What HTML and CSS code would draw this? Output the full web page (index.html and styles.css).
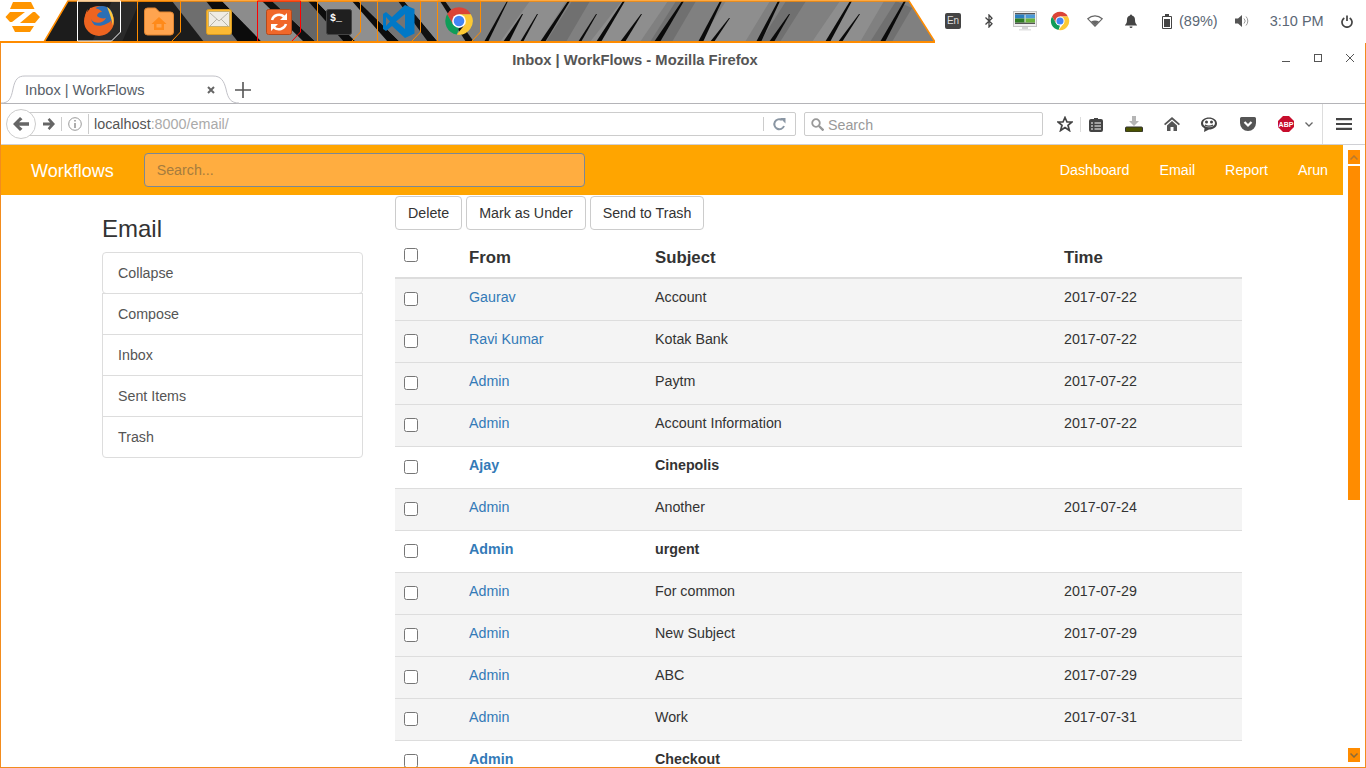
FILE: index.html

```html
<!DOCTYPE html>
<html>
<head>
<meta charset="utf-8">
<title>Inbox | WorkFlows</title>
<link rel="stylesheet" href="styles.css">
</head>
<body>

<svg class="defs">
  <symbol id="chrome" viewBox="0 0 48 48">
    <path fill="#db4437" d="M24 2A22 22 0 0 1 43 13H24L14.500 29.500 5 13A22 22 0 0 1 24 2Z"/>
    <path fill="#0f9d58" d="M5 13L14.500 29.500 24 35 20.500 45.700A22 22 0 0 1 5 13Z"/>
    <path fill="#fcc934" d="M43 13A22 22 0 0 1 20.500 45.700L33.500 29.500 24 13Z"/>
    <circle cx="24" cy="24" r="11" fill="#fff"/>
    <circle cx="24" cy="24" r="8.500" fill="#4285f4"/>
  </symbol>
</svg>

<div class="panel">
  <svg class="launcher" width="935" height="43" viewBox="0 0 935 43">
    <!-- band picture -->
    <polygon fill="#808080" points="68,1 909,1 935,42 44,42"/>
    <polygon fill="#1c1c1c" points="68,1 200,1 226,42 44,42"/>
    <polygon fill="#2a2a2a" points="112,1 140,1 122,42 92,42"/>
    <polygon fill="#6e6e6e" points="172,1 206,1 238,42 204,42"/>
    <polygon fill="#0c0c0c" points="206,1 222,1 262,42 238,42"/>
    <polygon fill="#8c8c8c" points="222,1 262,1 304,42 262,42"/>
    <polygon fill="#111" points="262,1 272,1 316,42 304,42"/>
    <polygon fill="#666" points="272,1 308,1 344,42 316,42"/>
    <polygon fill="#0c0c0c" points="308,1 316,1 356,42 344,42"/>
    <polygon fill="#8f8f8f" points="316,1 352,1 388,42 356,42"/>
    <polygon fill="#0c0c0c" points="352,1 358,1 400,42 388,42"/>
    <polygon fill="#747474" points="358,1 398,1 428,42 400,42"/>
    <polygon fill="#111" points="398,1 404,1 438,42 428,42"/>
    <polygon fill="#8a8a8a" points="404,1 440,1 466,42 438,42"/>
    <polygon fill="#111" points="440,1 445,1 474,42 466,42"/>
    <g fill="#8e8e8e">
      <polygon points="500,42 540,42 566,1 530,1"/>
      <polygon points="590,42 640,42 668,1 622,1"/>
      <polygon points="700,42 745,42 770,1 726,1"/>
      <polygon points="812,42 860,42 884,1 840,1"/>
    </g>
    <g fill="#707070">
      <polygon points="546,42 566,42 590,1 572,1"/>
      <polygon points="650,42 672,42 696,1 676,1"/>
      <polygon points="760,42 780,42 806,1 786,1"/>
      <polygon points="870,42 892,42 912,8 896,1"/>
    </g>
    <g fill="#0a0a0a">
      <polygon points="484,42 488,42 508,1 507,1"/>
      <polygon points="503,42 509,42 523,14 522,14"/>
      <polygon points="520,42 523,42 538,14 537,14"/>
      <polygon points="540,42 545,42 570,1 568,1"/>
      <polygon points="578,42 581,42 597,14 596,14"/>
      <polygon points="596,42 601,42 625,1 623,1"/>
      <polygon points="620,42 625,42 642,14 641,14"/>
      <polygon points="654,42 660,42 684,1 682,1"/>
      <polygon points="698,42 703,42 722,1 720,1"/>
      <polygon points="756,42 761,42 780,1 778,1"/>
      <polygon points="769,42 774,42 790,14 789,14"/>
      <polygon points="825,42 830,42 852,1 850,1"/>
      <polygon points="838,42 842,42 860,14 859,14"/>
      <polygon points="880,42 885,42 906,1 904,1"/>
      <polygon points="710,42 714,42 730,18 729,18"/>
    </g>
    <path fill="none" stroke="#ff8c00" stroke-width="1.500" d="M44 42L68 1H909L935 42"/>
    <path fill="none" stroke="#ff8c00" stroke-width="2" d="M0 42H935"/>

    <!-- zorin logo -->
    <g fill="#ff9500">
      <polygon points="13,2 31,2 34.500,9 10,9"/>
      <polygon points="5.500,17 10,12 25,12 12,22 10,22"/>
      <polygon points="40,17 35,23 20,23 33,12 35,12"/>
      <polygon points="12,26 34,26 30,32 15,32"/>
    </g>

    <!-- launcher cells -->
    <g fill="none" stroke-width="1">
      <path stroke="#fff" d="M77.500 41V1H120.500V32L111.500 41Z"/>
      <path stroke="#ff8c00" d="M137.500 41V1H180.500V32L172 41"/>
      <path stroke="#f00" d="M257.500 41V1H300.500V32L292 41"/>
      <path stroke="#ff8c00" d="M317.500 41V1H360.500V32L352 41"/>
      <path stroke="#ff8c00" d="M377.500 41V1H420.500V32L412 41"/>
      <path stroke="#ff8c00" d="M437.500 41V1H480.500V32L472 41"/>
    </g>

    <!-- firefox -->
    <circle cx="99" cy="21" r="15" fill="#ee6420"/>
    <circle cx="102" cy="17" r="11" fill="#2d6fb5"/>
    <path fill="#ffc63a" d="M107 7C112 10 115 18 113 26C112 21 110 14 107 7Z"/>
    <path fill="#ee6420" d="M88 9C86 14 86 20 90 23C94 26 101 27 106 24C109 23 111 21 112 19C111 27 105 33 97 32C90 31 85 25 85 18C85 15 86 11 88 9Z"/>
    <path fill="#ee6420" d="M90 8C94 7 100 9 102 12C99 12 97 14 97 16C99 18 103 19 106 18C104 22 99 24 94 22C90 20 88 13 90 8Z"/>

    <!-- folder -->
    <path fill="#ffa44f" stroke="#e08430" d="M144.500 11a3 3 0 0 1 3-3h8l4 4h11a3 3 0 0 1 3 3v17a3 3 0 0 1-3 3h-23a3 3 0 0 1-3-3Z"/>
    <path fill="#ff8a1a" d="M159 17l7.500 7h-2.500V30h-10v-6h-2.500ZM156.500 24v3.500h5V24Z"/>

    <!-- mail -->
    <rect x="206.500" y="9.500" width="25" height="25" rx="2" fill="#fbb934" stroke="#d99a20"/>
    <rect x="208.500" y="11.500" width="21" height="15" fill="#efece4" stroke="#c8b070"/>
    <path fill="none" stroke="#b8b4a8" d="M210 13l9 8 9-8M210 26l7-7M228 26l-7-7"/>

    <!-- sync -->
    <rect x="266.500" y="9.500" width="25" height="25" rx="2" fill="#f0672a" stroke="#b34a1c"/>
    <path fill="none" stroke="#fff" stroke-width="2.500" d="M272 20a7.500 7.500 0 0 1 12-3.500M286 24a7.500 7.500 0 0 1-12 3.500"/>
    <path fill="#fff" d="M287 13v7h-7ZM271 31v-7h7Z"/>

    <!-- terminal -->
    <rect x="326.500" y="9.500" width="25" height="25" rx="2" fill="#1f1f1f" stroke="#444"/>
    <text class="term-text" x="330" y="21">$_</text>

    <!-- vs code -->
    <path fill="#0078c6" d="M405 5L414.500 9V33.500L405 38L392 26L386 31L383 29V14L386 12L392 17ZM405 14L396 21.500L405 29ZM386 17V26L390 21.500Z"/>

    <use href="#chrome" x="444" y="6" width="30" height="30"/>
  </svg>

  <div class="tray">
    <span class="tray-en">En</span>
    <svg class="tray-bt" width="8" height="14" viewBox="0 0 8 14"><path fill="none" stroke="#444" stroke-width="1.300" d="M0.500 3.500L7 9.800 4 13V1L7 4.200 0.500 10.500"/></svg>
    <svg class="tray-monitor" width="24" height="20" viewBox="0 0 24 20">
      <rect x="0.500" y="0.500" width="23" height="15" fill="#efefef" stroke="#c4c4c4"/>
      <rect x="2" y="2" width="20" height="1.500" fill="#555"/>
      <rect x="2" y="11.500" width="20" height="1.500" fill="#555"/>
      <rect x="2" y="3.500" width="9.500" height="4" fill="#2b7fc0"/>
      <rect x="12.500" y="3.500" width="9.500" height="4" fill="#4b9ad8"/>
      <rect x="2" y="7.500" width="9.500" height="4" fill="#2f7d24"/>
      <rect x="12.500" y="7.500" width="9.500" height="4" fill="#6ab23c"/>
      <rect x="9" y="16" width="6" height="2" fill="#d4d4d4"/>
      <rect x="6" y="18" width="12" height="1.500" fill="#e2e2e2"/>
    </svg>
    <svg class="tray-chrome" width="20" height="20"><use href="#chrome" width="20" height="20"/></svg>
    <svg class="tray-wifi" width="16" height="12" viewBox="0 0 16 12"><path fill="none" stroke="#666" stroke-width="1.200" d="M0.800 3.800C5 0 11 0 15.200 3.800L8 11.200Z"/><path fill="#666" d="M4 6.500C6.500 5 9.500 5 12 6.500L8 10.500Z"/></svg>
    <svg class="tray-bell" width="12" height="14" viewBox="0 0 12 14"><path fill="#444" d="M6 0.500a1 1 0 0 1 1 1C9.500 2 10 4 10 6c0 3 1 4 2 5v0.500H0V11c1-1 2-2 2-5 0-2 .5-4 3-4.500a1 1 0 0 1 1-1ZM4.500 12.500h3a1.500 1.500 0 0 1-3 0Z"/></svg>
    <svg class="tray-battery" width="10" height="15" viewBox="0 0 10 15"><path fill="none" stroke="#444" d="M0.500 2.500H9.500V14.500H0.500Z"/><rect x="3" y="0" width="4" height="2" fill="#444"/><rect x="2" y="5" width="6" height="8" fill="#444"/></svg>
    <span class="tray-text tray-percent">(89%)</span>
    <svg class="tray-volume" width="14" height="14" viewBox="0 0 14 14"><path fill="#555" d="M0 4.500H3L7 1V13L3 9.500H0Z"/><path fill="none" stroke="#999" d="M9 4.500a3.500 3.500 0 0 1 0 5M11 2.500a6.500 6.500 0 0 1 0 9"/></svg>
    <span class="tray-text tray-time">3:10 PM</span>
    <svg class="tray-power" width="12" height="13" viewBox="0 0 12 13"><path fill="none" stroke="#444" stroke-width="1.700" d="M3.300 3A5 5 0 1 0 8.700 3M6 0.500V6"/></svg>
  </div>
</div>

<div class="window">
  <div class="titlebar">
    <div class="title">Inbox | WorkFlows - Mozilla Firefox</div>
    <div class="controls">
      <svg width="8" height="8" viewBox="0 0 8 8"><path stroke="#555" d="M0 7.500H8"/></svg>
      <svg width="8" height="8" viewBox="0 0 8 8"><rect x="0.500" y="0.500" width="7" height="7" fill="none" stroke="#555"/></svg>
      <svg width="8" height="8" viewBox="0 0 8 8"><path stroke="#555" d="M0 0L8 8M8 0L0 8"/></svg>
    </div>
  </div>

  <div class="tabbar">
    <div class="tab">
      <svg class="tab-shape" width="238" height="29" viewBox="0 0 238 29"><path fill="#fff" stroke="#c2c2c8" d="M0 28C8 28 10 24 12 14C14 4 17 1 24 1H212C220 1 223 6 225 14C227 24 230 28 238 28"/></svg>
      <span class="tab-label">Inbox | WorkFlows</span>
      <svg class="tab-close" width="8" height="8" viewBox="0 0 8 8"><path stroke="#666" stroke-width="2" d="M1 1L7 7M7 1L1 7"/></svg>
    </div>
    <svg class="tab-new" width="16" height="16" viewBox="0 0 16 16"><path stroke="#555" stroke-width="1.600" d="M8 0V16M0 8H16"/></svg>
  </div>

  <div class="navbar">
    <div class="back">
      <svg width="16" height="14" viewBox="0 0 16 14"><path fill="#666" d="M7 0L9.500 2.200 6 5.300H16V8.700H6L9.500 11.800 7 14 0 7Z"/></svg>
    </div>
    <div class="urlbar">
      <svg class="forward" width="12" height="12" viewBox="0 0 12 12"><path fill="#666" d="M6.500 0L12 6 6.500 12 4.700 10.200 7 7.400H0V4.600H7L4.700 1.800Z"/></svg>
      <svg class="info" width="14" height="14" viewBox="0 0 14 14"><circle cx="7" cy="7" r="6.300" fill="none" stroke="#999"/><path fill="#999" d="M6.200 3h1.600v1.600H6.200ZM6.200 6h1.600v5H6.200Z"/></svg>
      <span class="url"><span class="url-host">localhost</span>:8000/email/</span>
      <svg class="reload" width="14" height="14" viewBox="0 0 14 14"><path fill="none" stroke="#8a96a3" stroke-width="2" d="M12 9A5 5 0 1 1 10 3"/><path fill="#8a96a3" d="M8 1L13.500 1V6.500Z"/></svg>
    </div>
    <div class="searchbar">
      <svg width="13" height="13" viewBox="0 0 13 13"><circle cx="5" cy="5" r="3.800" fill="none" stroke="#999" stroke-width="1.800"/><path stroke="#999" stroke-width="2.400" d="M8 8L12.500 12.500"/></svg>
      <span class="search-text">Search</span>
    </div>
    <div class="tools">
      <svg class="tool-star" width="16" height="16" viewBox="0 0 16 16"><path fill="none" stroke="#444" stroke-width="1.700" d="M8 1.500L10 6H15L11 9.300 12.400 14.500 8 11.500 3.600 14.500 5 9.300 1 6H6Z"/></svg>
      <svg class="tool-clip" width="14" height="15" viewBox="0 0 14 15"><path fill="#444" d="M2 2H5V1H9V2H12A2 2 0 0 1 14 4V13A2 2 0 0 1 12 15H2A2 2 0 0 1 0 13V4A2 2 0 0 1 2 2Z"/><path stroke="#fff" d="M2 6H4M2 9H4M2 12H4M5.500 6H12M5.500 9H12M5.500 12H12"/></svg>
      <svg class="tool-down" width="18" height="16" viewBox="0 0 18 16"><path fill="#b5b5b5" d="M7 0H11V5H14L9 10 4 5H7Z"/><rect x="0.500" y="11" width="17" height="5" rx="1" fill="#4a5200" stroke="#333"/></svg>
      <svg class="tool-home" width="16" height="14" viewBox="0 0 16 14"><path fill="#555" d="M8 0L16 7 14.800 8.200 8 2.400 1.200 8.200 0 7ZM3 8.500L8 4 13 8.500V14H9.500V10H6.500V14H3Z"/></svg>
      <svg class="tool-smile" width="16" height="15" viewBox="0 0 16 15"><path fill="#444" d="M8 0.500C12.400 0.500 16 3 16 6.500S12.400 12.500 8 12.500L3 15 3.500 11.300C1.300 10.200 0 8.500 0 6.500 0 3 3.600 0.500 8 0.500Z"/><ellipse cx="8" cy="6" rx="6" ry="4.300" fill="#fff"/><circle cx="5.500" cy="5" r="1.500" fill="#444"/><circle cx="10.500" cy="5" r="1.500" fill="#444"/><path fill="none" stroke="#444" stroke-width="1.200" d="M4 8C6 9.500 10 9.500 12 8"/></svg>
      <svg class="tool-pocket" width="16" height="14" viewBox="0 0 16 14"><path fill="#555" d="M1.500 0H14.500A1.500 1.500 0 0 1 16 1.500V6A8 8 0 0 1 0 6V1.500A1.500 1.500 0 0 1 1.500 0Z"/><path fill="none" stroke="#fff" stroke-width="2.200" d="M4.500 5L8 8.500 11.500 5"/></svg>
      <svg class="tool-abp" width="16" height="16" viewBox="0 0 16 16"><polygon fill="#c70d2c" points="5,0 11,0 16,5 16,11 11,16 5,16 0,11 0,5"/><text class="abp-text" x="8" y="11">ABP</text></svg>
      <svg class="tool-chev" width="8" height="5" viewBox="0 0 8 5"><path fill="none" stroke="#666" stroke-width="1.300" d="M0.500 0.500L4 4 7.500 0.500"/></svg>
      <svg class="tool-menu" width="16" height="12" viewBox="0 0 16 12"><path stroke="#444" stroke-width="2.200" d="M0 1.200H16M0 6H16M0 10.800H16"/></svg>
    </div>
  </div>

  <div class="viewport">
    <div class="page">
      <div class="site-nav">
        <a class="brand">Workflows</a>
        <input class="site-search" placeholder="Search...">
        <div class="site-links">
          <a>Dashboard</a>
          <a>Email</a>
          <a>Report</a>
          <a>Arun</a>
        </div>
      </div>

      <div class="content">
        <div class="sidebar">
          <h3>Email</h3>
          <div class="list-group">
            <a class="list-item">Collapse</a>
            <a class="list-item">Compose</a>
            <a class="list-item">Inbox</a>
            <a class="list-item">Sent Items</a>
            <a class="list-item">Trash</a>
          </div>
        </div>

        <div class="mail">
          <div class="actions">
            <button class="btn">Delete</button>
            <button class="btn">Mark as Under</button>
            <button class="btn">Send to Trash</button>
          </div>
          <table class="mail-table">
            <thead>
              <tr>
                <th class="check"><input type="checkbox"></th>
                <th class="col-from">From</th>
                <th class="col-subject">Subject</th>
                <th class="col-time">Time</th>
              </tr>
            </thead>
            <tbody>
              <tr class="read"><td class="check"><input type="checkbox"></td><td><a>Gaurav</a></td><td>Account</td><td>2017-07-22</td></tr>
              <tr class="read"><td class="check"><input type="checkbox"></td><td><a>Ravi Kumar</a></td><td>Kotak Bank</td><td>2017-07-22</td></tr>
              <tr class="read"><td class="check"><input type="checkbox"></td><td><a>Admin</a></td><td>Paytm</td><td>2017-07-22</td></tr>
              <tr class="read"><td class="check"><input type="checkbox"></td><td><a>Admin</a></td><td>Account Information</td><td>2017-07-22</td></tr>
              <tr class="unread"><td class="check"><input type="checkbox"></td><td><a>Ajay</a></td><td>Cinepolis</td><td></td></tr>
              <tr class="read"><td class="check"><input type="checkbox"></td><td><a>Admin</a></td><td>Another</td><td>2017-07-24</td></tr>
              <tr class="unread"><td class="check"><input type="checkbox"></td><td><a>Admin</a></td><td>urgent</td><td></td></tr>
              <tr class="read"><td class="check"><input type="checkbox"></td><td><a>Admin</a></td><td>For common</td><td>2017-07-29</td></tr>
              <tr class="read"><td class="check"><input type="checkbox"></td><td><a>Admin</a></td><td>New Subject</td><td>2017-07-29</td></tr>
              <tr class="read"><td class="check"><input type="checkbox"></td><td><a>Admin</a></td><td>ABC</td><td>2017-07-29</td></tr>
              <tr class="read"><td class="check"><input type="checkbox"></td><td><a>Admin</a></td><td>Work</td><td>2017-07-31</td></tr>
              <tr class="unread"><td class="check"><input type="checkbox"></td><td><a>Admin</a></td><td>Checkout</td><td></td></tr>
            </tbody>
          </table>
        </div>
      </div>
    </div>

    <div class="scrollbar">
      <div class="scroll-btn">
        <svg width="8" height="5" viewBox="0 0 8 5"><path fill="none" stroke="#b87a2c" stroke-width="1.500" d="M0.500 4.500L4 1 7.500 4.500"/></svg>
      </div>
      <div class="scroll-thumb"></div>
      <div class="scroll-btn scroll-down">
        <svg width="8" height="5" viewBox="0 0 8 5"><path fill="none" stroke="#8a6a3a" stroke-width="1.500" d="M0.500 0.500L4 4 7.500 0.500"/></svg>
      </div>
    </div>
  </div>
</div>

</body>
</html>
```

FILE: styles.css

```css
html, body {
    margin: 0;
    height: 768px;
    overflow: hidden;
    background: #fff;
    font-family: "Liberation Sans", Arial, sans-serif;
    font-size: 14.25px;
    color: #333;
}
body {
    display: flex;
    flex-direction: column;
}
svg {
    display: block;
    flex: none;
}
.defs {
    width: 0;
    height: 0;
    position: absolute;
}

/* desktop panel */
.panel {
    display: flex;
    height: 43px;
    flex: none;
}
.term-text {
    font-family: "Liberation Mono", monospace;
    font-size: 10px;
    font-weight: bold;
    fill: #fff;
}
.tray {
    display: flex;
    align-items: center;
    height: 42px;
    padding-left: 10px;
}
.tray-en {
    width: 16px;
    height: 16px;
    background: #444;
    border-radius: 2px;
    color: #ddd;
    font-size: 10px;
    line-height: 16px;
    text-align: center;
}
.tray-bt { margin-left: 24px; }
.tray-monitor { margin-left: 20px; }
.tray-chrome { margin-left: 13px; }
.tray-wifi { margin-left: 17px; }
.tray-bell { margin-left: 22px; }
.tray-battery { margin-left: 25px; }
.tray-volume { margin-left: 17px; }
.tray-power { margin-left: 17px; }
.tray-text {
    font-size: 14.5px;
    color: #5b6775;
}
.tray-percent { margin-left: 7px; }
.tray-time { margin-left: 21px; }

/* browser window */
.window {
    flex: 1;
    min-height: 0;
    display: flex;
    flex-direction: column;
    border-left: 1px solid #f28c1e;
    border-right: 1px solid #f28c1e;
    border-bottom: 1px solid #f28c1e;
    overflow: hidden;
}
.titlebar {
    display: flex;
    height: 32px;
    flex: none;
}
.title {
    flex: 1;
    text-align: center;
    font-size: 14.75px;
    font-weight: bold;
    color: #555;
    line-height: 34px;
}
.controls {
    width: 96px;
    display: flex;
    gap: 24px;
    padding: 11px 0 0 13px;
    box-sizing: border-box;
}

.tabbar {
    display: flex;
    height: 29px;
    flex: none;
    border-bottom: 1px solid #b4b4b8;
    box-sizing: border-box;
    align-items: center;
}
.tab {
    position: relative;
    width: 234px;
    height: 29px;
    flex: none;
}
.tab-shape {
    position: absolute;
    left: 0;
    top: 0;
}
.tab-label {
    position: absolute;
    left: 24px;
    top: 7px;
    font-size: 14.6px;
    color: #586068;
}
.tab-close {
    position: absolute;
    left: 206px;
    top: 11px;
}
.tab-new {
    margin-top: 2px;
}

.navbar {
    display: flex;
    align-items: center;
    height: 41px;
    flex: none;
    border-bottom: 1px solid #d0d0d4;
    box-sizing: border-box;
    padding-left: 5px;
}
.back {
    width: 30px;
    height: 30px;
    box-sizing: border-box;
    border: 1px solid #ccc;
    border-radius: 50%;
    background: #fff;
    display: flex;
    align-items: center;
    justify-content: center;
    position: relative;
    z-index: 1;
    flex: none;
}
.urlbar {
    width: 775px;
    height: 24px;
    margin-left: -15px;
    box-sizing: border-box;
    border: 1px solid #ccc;
    border-radius: 0 2px 2px 0;
    display: flex;
    align-items: center;
    flex: none;
}
.forward {
    margin-left: 21px;
}
.info {
    margin-left: 6px;
    padding-left: 6px;
    width: 14px;
    box-sizing: content-box;
    border-left: 1px solid #ccc;
    height: 14px;
}
.url {
    margin-left: 6px;
    padding-left: 5px;
    border-left: 1px solid #ccc;
    color: #aaa;
    font-size: 14.35px;
    line-height: 20px;
    flex: 1;
}
.url-host {
    color: #555;
    position: relative;
}
.reload {
    padding: 0 9px 0 8px;
    border-left: 1px solid #ccc;
    box-sizing: content-box;
    width: 14px;
}
.searchbar {
    width: 239px;
    height: 24px;
    margin-left: 8px;
    box-sizing: border-box;
    border: 1px solid #ccc;
    border-radius: 2px;
    display: flex;
    align-items: center;
    padding-left: 6px;
    flex: none;
}
.search-text {
    margin-left: 4px;
    padding-top: 1px;
    color: #999;
}
.tools {
    display: flex;
    align-items: center;
    height: 40px;
}
.tool-star { margin-left: 14px; }
.tool-clip {
    margin-left: 7px;
    padding-left: 8px;
    border-left: 1px solid #ddd;
    box-sizing: content-box;
    width: 14px;
}
.tool-down { margin-left: 22px; }
.tool-home { margin-left: 21px; }
.tool-smile { margin-left: 21px; }
.tool-pocket { margin-left: 23px; }
.tool-abp { margin-left: 22px; }
.tool-chev { margin-left: 11px; }
.tool-menu {
    margin-left: 9px;
    padding: 14px 0 14px 13px;
    border-left: 1px solid #ddd;
    box-sizing: content-box;
}
.abp-text {
    font-size: 7px;
    font-weight: bold;
    fill: #fff;
    text-anchor: middle;
}

/* page in the browser */
.viewport {
    flex: 1;
    min-height: 0;
    display: flex;
}
.page {
    width: 1342px;
    flex: none;
    overflow: hidden;
}
.site-nav {
    display: flex;
    align-items: center;
    height: 50px;
    background: #ffa500;
    color: #fff;
}
.brand {
    margin-left: 30px;
    padding-top: 2px;
    font-size: 18px;
}
.site-search {
    width: 441px;
    height: 34px;
    margin-left: 30px;
    box-sizing: border-box;
    padding: 6px 12px;
    background: #ffad40;
    border: 1px solid #7b8794;
    border-radius: 4px;
    font: 14.25px "Liberation Sans", Arial, sans-serif;
}
.site-search::placeholder {
    color: #a67c3e;
    opacity: 1;
}
.site-links {
    margin-left: auto;
    display: flex;
}
.site-links a {
    padding: 0 15px;
}

.content {
    display: flex;
    padding-left: 101px;
}
.sidebar {
    width: 261px;
    margin-right: 32px;
    flex: none;
}
.sidebar h3 {
    margin: 20px 0 10px;
    font-size: 24px;
    font-weight: normal;
    line-height: 27px;
}
.list-item {
    display: block;
    padding: 10px 15px;
    line-height: 20px;
    margin-bottom: -1px;
    border: 1px solid #ddd;
    color: #555;
    background: #fff;
}
.list-item:first-child {
    border-radius: 4px;
}
.list-item:last-child {
    border-radius: 0 0 4px 4px;
}

.mail {
    width: 847px;
    flex: none;
}
.actions {
    display: flex;
    gap: 4px;
    padding-top: 1px;
}
.btn {
    height: 34px;
    padding: 6px 12px;
    border: 1px solid #ccc;
    border-radius: 4px;
    background: #fff;
    color: #333;
    font: 14.25px "Liberation Sans", Arial, sans-serif;
}
.mail-table {
    width: 847px;
    margin-top: 8px;
    border-collapse: separate;
    border-spacing: 0;
    table-layout: fixed;
}
.mail-table th {
    height: 41px;
    box-sizing: border-box;
    padding: 10px 8px 0;
    text-align: left;
    vertical-align: top;
    font-size: 16.8px;
    line-height: 20px;
    border-bottom: 2px solid #ddd;
}
.mail-table td {
    height: 42px;
    box-sizing: border-box;
    padding: 8px;
    vertical-align: top;
    line-height: 20px;
    border-bottom: 1px solid #ddd;
}
.mail-table .check {
    width: 66px;
    padding: 13px 0 0 9px;
    box-sizing: border-box;
}
.mail-table th.check {
    padding-top: 10px;
}
.col-from { width: 186px; }
.col-subject { width: 409px; }
.col-time { width: 186px; }
.mail-table input {
    display: block;
    width: 14px;
    height: 14px;
    margin: 0;
}
.mail-table a {
    color: #337ab7;
}
.read td {
    background: #f4f4f4;
}
.unread td {
    background: #fff;
    font-weight: bold;
}

.scrollbar {
    flex: 1;
    display: flex;
    flex-direction: column;
    align-items: center;
    padding: 5px;
    gap: 2px;
    box-sizing: border-box;
}
.scroll-btn {
    width: 12px;
    height: 14px;
    background: #ff8c00;
    display: flex;
    align-items: center;
    justify-content: center;
    flex: none;
}
.scroll-thumb {
    width: 12px;
    height: 334px;
    background: #ff8c00;
    flex: none;
}
.scroll-down {
    margin-top: auto;
}
```
